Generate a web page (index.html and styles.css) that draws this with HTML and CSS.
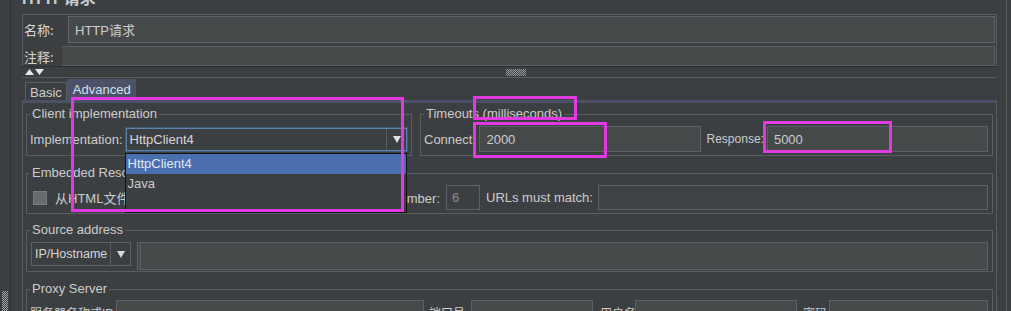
FILE: index.html
```html
<!DOCTYPE html>
<html lang="zh">

<head>
    <meta charset="UTF-8">
    <title>HTTP请求 - Advanced</title>
    <link rel="stylesheet" href="styles.css">
</head>

<body>
    <div class="window">
        <div class="edge-left">
            <div class="grip"></div>
        </div>

        <div class="main">
            <div class="title">HTTP请求</div>

            <div class="meta">
                <div class="meta-row name">
                    <span class="meta-label">名称:</span>
                    <div class="meta-field">HTTP请求</div>
                </div>
                <div class="meta-row comment">
                    <span class="meta-label">注释:</span>
                    <div class="meta-field"></div>
                </div>
            </div>

            <div class="divider">
                <svg class="arrows" width="20" height="8" viewBox="0 0 20 8">
                    <polygon points="0,7 4.5,1 9,7" fill="#e6e6e6" />
                    <polygon points="10,1 19,1 14.5,7" fill="#e6e6e6" />
                </svg>
                <span class="grip-dots"></span>
            </div>

            <div class="tabs">
                <div class="tab">Basic</div>
                <div class="tab active">Advanced</div>
            </div>

            <div class="tab-panel">
                <div class="group-row">
                    <fieldset class="group client">
                        <legend>Client implementation</legend>
                        <div class="line">
                            <span class="label">Implementation:</span>
                            <div class="combo focused">
                                <span class="combo-text">HttpClient4</span>
                                <span class="combo-arrow">
                                    <svg width="8" height="7" viewBox="0 0 8 7"><polygon points="0,0 8,0 4,7" fill="#e0e0e0" /></svg>
                                </span>
                                <div class="popup">
                                    <div class="option selected">HttpClient4</div>
                                    <div class="option">Java</div>
                                </div>
                            </div>
                        </div>
                    </fieldset>

                    <fieldset class="group timeouts">
                        <legend>Timeouts (milliseconds)</legend>
                        <div class="line">
                            <span class="label">Connect</span>
                            <div class="field connect">2000</div>
                            <span class="label response">Response:</span>
                            <div class="field">5000</div>
                        </div>
                    </fieldset>
                </div>

                <fieldset class="group embedded">
                    <legend>Embedded Resources from HTML Files</legend>
                    <div class="line embed">
                        <div class="embed-left">
                            <span class="checkbox"></span>
                            <span class="cn">从HTML文件获取所有内含的资源</span>
                            <span class="checkbox second"></span>
                            <span class="label">并行下载. Number:</span>
                        </div>
                        <div class="field small disabled">6</div>
                        <span class="label urls">URLs must match:</span>
                        <div class="field dim"></div>
                    </div>
                </fieldset>

                <fieldset class="group source">
                    <legend>Source address</legend>
                    <div class="line source-line">
                        <div class="combo plain">
                            <span class="combo-text">IP/Hostname</span>
                            <span class="combo-arrow">
                                <svg width="8" height="7" viewBox="0 0 8 7"><polygon points="0,0 8,0 4,7" fill="#d8d8d8" /></svg>
                            </span>
                        </div>
                        <div class="field double"></div>
                    </div>
                </fieldset>

                <fieldset class="group proxy">
                    <legend>Proxy Server</legend>
                    <div class="line proxy-line">
                        <span class="label cn p-server">服务器名称或IP:</span>
                        <div class="field w-server"></div>
                        <span class="label cn p-port">端口号:</span>
                        <div class="field w-port"></div>
                        <span class="label cn p-user">用户名</span>
                        <div class="field w-user"></div>
                        <span class="label cn p-pass">密码</span>
                        <div class="field"></div>
                    </div>
                </fieldset>
            </div>
        </div>

        <div class="edge-right"></div>

        <!-- annotation boxes drawn over the screenshot -->
        <div class="mark mark-client"></div>
        <div class="mark mark-title"></div>
        <div class="mark mark-connect"></div>
        <div class="mark mark-response"></div>
    </div>
</body>

</html>
```

FILE: styles.css
```css
body {
    margin: 0;
    background-color: #3c3f41;
    font-family: "Liberation Sans", "Noto Sans CJK SC", sans-serif;
    font-size: 13px;
    color: #cccccc;
}

.window {
    position: relative;
    display: flex;
    width: 1011px;
    height: 311px;
    overflow: hidden;
}

.edge-left {
    width: 10px;
    border-right: 1px solid #2b2d2e;
    display: flex;
    flex-direction: column;
}

.grip {
    margin-top: auto;
    margin-left: 2px;
    margin-bottom: -2px;
    width: 6px;
    height: 22px;
    background: repeating-conic-gradient(#a6a6a6 0 25%, transparent 0 50%) 0 0 / 2px 2px;
}

.main {
    flex: 1;
    min-width: 0;
    padding: 0 9px 0 11px;
}

.edge-right {
    width: 4px;
    border-left: 1px solid #5c5f61;
}

/* title + name / comment */

.title {
    height: 7px;
    display: flex;
    align-items: flex-end;
    overflow: hidden;
    font-size: 16px;
    line-height: 16px;
    font-weight: bold;
    color: #cccccc;
}

.meta {
    margin-top: 7px;
    border: 1px solid #5a5d5f;
    border-bottom: 0;
    padding: 1px 1px 0 1px;
}

.meta-row {
    display: flex;
    align-items: center;
}

.meta-row.name {
    height: 27px;
}

.meta-row.comment {
    height: 20px;
    margin-top: 3px;
}

.meta-label {
    font-family: "Noto Sans CJK SC", sans-serif;
    font-size: 13px;
    color: #d6d6d6;
    width: 44px;
    flex: 0 0 auto;
}

.comment .meta-label {
    width: 38px;
}

.meta-field {
    flex: 1;
    height: 100%;
    box-sizing: border-box;
    border: 1px solid #626567;
    background-color: #45494a;
    padding-left: 6px;
    display: flex;
    align-items: center;
    font-family: "Liberation Sans", "Noto Sans CJK SC", sans-serif;
    font-size: 13px;
    color: #cccccc;
}

.comment .meta-field {
    background-color: #464a46;
    border-left: 0;
    border-color: #5c5f5f;
}

.divider {
    height: 10px;
    border-top: 1px solid #2c2e2f;
    border-bottom: 1px solid #5a5d5f;
    display: flex;
    align-items: center;
}

.arrows {
    margin-left: 3px;
}

.grip-dots {
    margin-left: 461px;
    width: 20px;
    height: 7px;
    background: repeating-conic-gradient(#9c9c9c 0 25%, transparent 0 50%) 0 0 / 2px 2px;
}

/* tabs */

.tabs {
    display: flex;
    align-items: flex-end;
    height: 20px;
    margin-top: 2px;
    padding-left: 3px;
}

.tab {
    height: 17px;
    line-height: 19px;
    padding: 0 4px;
    border: 1px solid #5b5e60;
    border-bottom: 0;
    color: #cccccc;
}

.tab.active {
    height: 20px;
    line-height: 20px;
    padding: 0 4px 0 5px;
    background-color: #4b5267;
    border-color: #4b5267;
    color: #d3e0f2;
}

.tab-panel {
    border-top: 3px solid #4b5267;
    border-left: 1px solid #5b5e60;
    border-right: 1px solid #5b5e60;
    padding: 4px 3px 0 3px;
}

/* titled groups */

.group {
    margin: 0;
    padding: 5px 4px 3px 3px;
    border: 1px solid #5b5e60;
    min-width: 0;
}

.group legend {
    padding: 0 2px;
    font-size: 13px;
    line-height: 14px;
    color: #cccccc;
}

.group-row {
    display: flex;
    gap: 8px;
}

.group.client {
    flex: 0 0 386px;
    box-sizing: border-box;
}

.group.timeouts {
    flex: 1;
}

.group.embedded {
    margin-top: 10px;
}

.group.source {
    margin-top: 9px;
    padding-bottom: 1px;
}

.group.proxy {
    margin-top: 10px;
    padding-top: 4px;
}

.line {
    display: flex;
    align-items: center;
    height: 26px;
}

.label {
    flex: 0 0 auto;
    color: #cccccc;
    white-space: nowrap;
}

.cn {
    color: #cccccc;
    white-space: nowrap;
}

.client .label {
    margin-right: 3px;
}

/* combo boxes */

.combo {
    position: relative;
    display: flex;
    align-items: stretch;
    box-sizing: border-box;
    background-color: #3c3f41;
}

.combo.focused {
    flex: 1;
    height: 23px;
    border: 1px solid #5a83ad;
    box-shadow: 0 0 0 1px #3d5a78;
}

.combo-text {
    flex: 1;
    display: flex;
    align-items: center;
    padding-left: 3px;
    color: #d6d6d6;
}

.combo-arrow {
    width: 19px;
    border-left: 1px solid #5b5e60;
    display: flex;
    align-items: center;
    justify-content: center;
}

.popup {
    position: absolute;
    left: -2px;
    top: 24px;
    width: 282px;
    height: 60px;
    box-sizing: border-box;
    border: 1px solid #121212;
    background-color: #3c3f41;
    z-index: 2;
}

.option {
    height: 20px;
    line-height: 20px;
    padding-left: 2px;
    color: #cccccc;
}

.option.selected {
    background-color: #4b6eaf;
    color: #e2e9f5;
}

.combo.plain {
    margin-left: 1px;
    width: 100px;
    height: 24px;
    border: 1px solid #5e6163;
    font-size: 12.5px;
}

.combo.plain .combo-text {
    flex: 0 0 78px;
    padding-left: 3px;
    box-sizing: border-box;
}

.combo.plain .combo-arrow {
    width: 20px;
}

/* text fields */

.field {
    flex: 1;
    height: 26px;
    box-sizing: border-box;
    border: 1px solid #5f6264;
    background-color: #45494a;
    padding-left: 6px;
    display: flex;
    align-items: center;
    color: #cccccc;
}

.field.connect {
    margin-left: 7px;
}

.label.response {
    margin-left: 6px;
    margin-right: 3px;
    font-size: 12px;
}

.embed {
    height: 25px;
}

.embed .field {
    height: 25px;
}

.embed-left {
    width: 410px;
    display: flex;
    align-items: center;
}

.checkbox {
    flex: 0 0 auto;
    width: 14px;
    height: 14px;
    box-sizing: border-box;
    margin-left: 3px;
    margin-right: 8px;
    border: 1px solid #7a7d7f;
    background-color: #686b6d;
}

.checkbox.second {
    margin-left: auto;
    margin-right: 4px;
}

.field.small {
    flex: 0 0 34px;
    margin-left: 6px;
    padding-left: 5px;
}

.field.disabled {
    background-color: #3c3f41;
    color: #8c8c8c;
}

.label.urls {
    margin-left: 6px;
    margin-right: 5px;
}

.field.dim {
    background-color: #404345;
}

.source-line {
    height: 28px;
}

.source-line .combo.plain {
    align-self: flex-start;
}

.field.double {
    height: 28px;
    margin-left: 6px;
    border-left: 4px double #5f6264;
}

.proxy-line {
    height: 24px;
    font-size: 12px;
}

.proxy-line .field {
    height: 24px;
}

.p-server {
    width: 86px;
}

.p-port {
    width: 42px;
    margin-left: 5px;
}

.p-user {
    width: 35px;
    margin-left: 7px;
}

.p-pass {
    width: 26px;
    margin-left: 6px;
}

.field.w-server {
    flex: 0 0 308px;
}

.field.w-port {
    flex: 0 0 122px;
}

.field.w-user {
    flex: 0 0 162px;
}

/* magenta annotation frames */

.mark {
    position: absolute;
    border: 3px solid #e03ae0;
    z-index: 3;
}

.mark-client {
    left: 71px;
    top: 97px;
    width: 327px;
    height: 109px;
}

.mark-title {
    left: 473px;
    top: 96px;
    width: 98px;
    height: 18px;
}

.mark-connect {
    left: 473px;
    top: 122px;
    width: 128px;
    height: 30px;
}

.mark-response {
    left: 763px;
    top: 121px;
    width: 123px;
    height: 26px;
}
```
